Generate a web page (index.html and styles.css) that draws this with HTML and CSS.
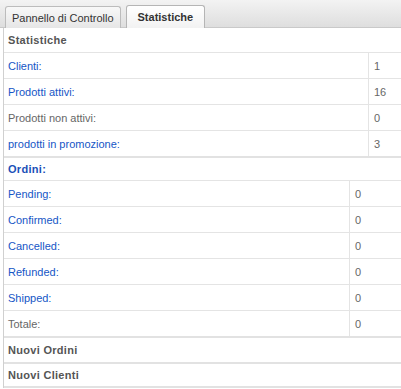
FILE: index.html
```html
<!DOCTYPE html>
<html lang="it">
<head>
    <meta charset="UTF-8">
    <title>Statistiche</title>
    <link rel="stylesheet" href="styles.css">
</head>
<body>

<div class="tabs">
    <a class="tab">Pannello di Controllo</a>
    <a class="tab active">Statistiche</a>
</div>

<div class="panel">
    <div class="section">
        <div class="section-title">Statistiche</div>
        <div class="stat-table stats">
            <div class="row"><a class="label link">Clienti:</a><span class="value">1</span></div>
            <div class="row"><a class="label link">Prodotti attivi:</a><span class="value">16</span></div>
            <div class="row"><span class="label">Prodotti non attivi:</span><span class="value">0</span></div>
            <div class="row"><a class="label link">prodotti in promozione:</a><span class="value">3</span></div>
        </div>
    </div>

    <div class="section">
        <div class="section-title short link">Ordini:</div>
        <div class="stat-table orders">
            <div class="row"><a class="label link">Pending:</a><span class="value">0</span></div>
            <div class="row"><a class="label link">Confirmed:</a><span class="value">0</span></div>
            <div class="row"><a class="label link">Cancelled:</a><span class="value">0</span></div>
            <div class="row"><a class="label link">Refunded:</a><span class="value">0</span></div>
            <div class="row"><a class="label link">Shipped:</a><span class="value">0</span></div>
            <div class="row"><span class="label">Totale:</span><span class="value">0</span></div>
        </div>
    </div>

    <div class="section">
        <div class="section-title">Nuovi Ordini</div>
    </div>

    <div class="section">
        <div class="section-title short">Nuovi Clienti</div>
    </div>
</div>

</body>
</html>
```

FILE: styles.css
```css
body {
    margin: 0;
    font-family: 'Liberation Sans', Arial, sans-serif;
    font-size: 11px;
    color: #666;
    background-color: #ffffff;
}
.tabs {
    display: flex;
    align-items: flex-end;
    gap: 5px;
    height: 27px;
    padding-left: 5px;
    background: linear-gradient(#f3f3f3, #dedede);
    border-bottom: 1px solid #c9c9c9;
}
.tab {
    display: flex;
    align-items: center;
    height: 21px;
    padding: 0 6px;
    margin-bottom: -1px;
    color: #333;
    font-size: 11px;
    border: 1px solid #bcbcbc;
    border-bottom: none;
    border-radius: 3px 3px 0 0;
    background: linear-gradient(#f8f8f8, #e6e6e6);
}
.tab.active {
    padding: 0 11px;
    height: 22px;
    font-weight: bold;
    color: #333;
    background: linear-gradient(#ffffff, #f2f2f2);
    border-color: #b5b5b5;
}
.panel {
    margin-left: 3px;
    border-left: 1px solid #d0d0d0;
}
.section {
    border-bottom: 2px solid #e2e2e2;
}
.section-title {
    display: flex;
    align-items: center;
    height: 24px;
    padding-left: 4px;
    font-weight: bold;
    letter-spacing: 0.3px;
    color: #555;
}
.section-title.short {
    height: 22px;
}
.section-title.link {
    color: #1a50b8;
}
.stat-table .row {
    display: grid;
    height: 25px;
    border-top: 1px solid #e4e4e4;
}
.stats .row {
    grid-template-columns: 364px 1fr;
}
.orders .row {
    grid-template-columns: 345px 1fr;
}
.label,
.value {
    display: flex;
    align-items: center;
    padding-left: 4px;
}
.value {
    border-left: 1px solid #e4e4e4;
    padding-left: 5px;
}
.link {
    color: #1656c6;
    cursor: pointer;
}
```
